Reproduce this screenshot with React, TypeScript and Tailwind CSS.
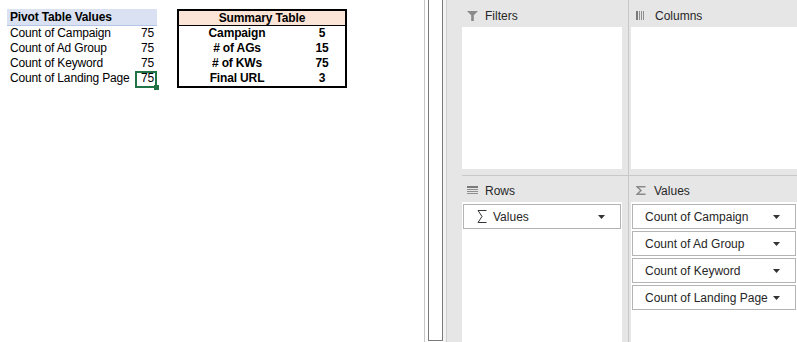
import type { ReactNode } from 'react';

const pivotRows = [
  { label: 'Count of Campaign', value: 75 },
  { label: 'Count of Ad Group', value: 75 },
  { label: 'Count of Keyword', value: 75 },
  { label: 'Count of Landing Page', value: 75, selected: true },
];

const summaryRows = [
  { label: 'Campaign', value: 5 },
  { label: '# of AGs', value: 15 },
  { label: '# of KWs', value: 75 },
  { label: 'Final URL', value: 3 },
];

const valueFields = ['Count of Campaign', 'Count of Ad Group', 'Count of Keyword', 'Count of Landing Page'];

function FunnelIcon() {
  return (
    <svg width="11" height="10" viewBox="0 0 11 10">
      <path d="M0 0H11L6.8 4.2V10H4.2V4.2Z" fill="#8a8a8a" />
    </svg>
  );
}

function ColumnsIcon() {
  return (
    <svg width="8" height="9" viewBox="0 0 8 9">
      <rect x="0" y="0" width="2" height="9" fill="#7a7a7a" />
      <rect x="3" y="0" width="1" height="9" fill="#8f8f8f" />
      <rect x="5" y="0" width="1" height="9" fill="#8f8f8f" />
      <rect x="7" y="0" width="1" height="9" fill="#8f8f8f" />
    </svg>
  );
}

function RowsIcon() {
  return (
    <svg width="11" height="9" viewBox="0 0 11 9">
      <rect x="0" y="0" width="11" height="2" fill="#7a7a7a" />
      <rect x="0" y="3" width="11" height="1" fill="#8f8f8f" />
      <rect x="0" y="5" width="11" height="1" fill="#8f8f8f" />
      <rect x="0" y="7" width="11" height="1" fill="#8f8f8f" />
    </svg>
  );
}

function SigmaIcon({ color, w, h, sw }: { color: string; w: number; h: number; sw: number }) {
  return (
    <svg width={w} height={h} viewBox={`0 0 ${w} ${h}`}>
      <path
        d={`M${w - 0.5} ${sw / 2}H1L${w / 2} ${h / 2}L1 ${h - sw / 2}H${w - 0.5}`}
        fill="none"
        stroke={color}
        strokeWidth={sw}
      />
    </svg>
  );
}

function Caret() {
  return (
    <svg width="7" height="4" viewBox="0 0 7 4">
      <path d="M0 0H7L3.5 4Z" fill="#333" />
    </svg>
  );
}

function AreaHeader({ icon, label, gap, className }: { icon: ReactNode; label: string; gap: string; className: string }) {
  return (
    <div className={`flex items-center pl-[5px] text-[12px] text-[#262626] ${gap} ${className}`}>
      {icon}
      <span>{label}</span>
    </div>
  );
}

function FieldItem({ children, pl }: { children: ReactNode; pl: string }) {
  return (
    <div className={`h-[25px] border border-[#b4b4b4] bg-white flex items-center justify-between pr-[15px] ${pl} text-[12px] text-[#262626]`}>
      {children}
      <Caret />
    </div>
  );
}

export default function App() {
  return (
    <div className="flex w-[797px] h-[342px] bg-white overflow-hidden font-['Liberation_Sans',Arial,sans-serif] text-[12px] text-black">
      {/* worksheet */}
      <div className="w-[424px] h-full flex items-start gap-[20px] pt-[9px] pl-[7px] tracking-[-0.15px]">
        <div className="w-[150px]">
          <div className="h-[17px] bg-[#d9e1f2] border-b border-[#b4c6e7] flex items-center pl-[3px] font-bold">
            Pivot Table Values
          </div>
          {pivotRows.map((r) => (
            <div key={r.label} className="h-[15px] flex items-center">
              <div className="flex-1 pl-[3px] leading-[15px]">{r.label}</div>
              <div className="w-[22px] h-full relative text-right pr-[3px] leading-[15px]">
                {r.value}
                {r.selected && (
                  <>
                    <div className="absolute left-0 top-0 w-[22px] h-[17px] border-2 border-[#217346]" />
                    <div className="absolute right-[-2px] bottom-[-4px] w-[5px] h-[5px] bg-[#217346]" />
                  </>
                )}
              </div>
            </div>
          ))}
        </div>

        <div className="w-[170px] border-2 border-black font-bold">
          <div className="h-[15px] bg-[#fce4d6] border-b border-black flex items-center justify-center">
            Summary Table
          </div>
          {summaryRows.map((r) => (
            <div key={r.label} className="h-[15px] flex items-center leading-[15px]">
              <div className="w-[116px] text-center">{r.label}</div>
              <div className="flex-1 text-center pl-[4px]">{r.value}</div>
            </div>
          ))}
        </div>
      </div>

      {/* split bar */}
      <div className="w-px bg-[#c6c6c6]" />
      <div className="w-[3px]" />
      <div className="w-[15px] h-[341px] border border-t-0 border-[#7a7a7a] bg-white" />
      <div className="w-[3px] bg-[#f3f3f3]" />
      <div className="w-px bg-[#d0d0d0]" />

      {/* pivot field areas */}
      <div className="flex-1 bg-[#e6e6e6] pl-[15px] flex flex-col">
        <div className="h-[175px] flex">
          <div className="w-[160px] flex flex-col">
            <AreaHeader icon={<FunnelIcon />} label="Filters" gap="gap-[7px]" className="h-[27px] pt-[4px]" />
            <div className="h-[142px] bg-white" />
          </div>
          <div className="w-[6px]" />
          <div className="w-px bg-[#c8c8c8]" />
          <div className="w-[2px]" />
          <div className="flex-1 flex flex-col">
            <AreaHeader icon={<ColumnsIcon />} label="Columns" gap="gap-[11px]" className="h-[27px] pt-[4px]" />
            <div className="h-[142px] bg-white" />
          </div>
        </div>

        <div className="h-px bg-[#c8c8c8]" />

        <div className="flex-1 flex">
          <div className="w-[160px] flex flex-col">
            <AreaHeader icon={<RowsIcon />} label="Rows" gap="gap-[7px]" className="h-[26px] pt-[3px]" />
            <div className="flex-1 bg-white pt-[2px] px-[1px]">
              <FieldItem pl="pl-[13px]">
                <div className="flex items-center gap-[6px]">
                  <SigmaIcon color="#333" w={10} h={13} sw={1} />
                  <span>Values</span>
                </div>
              </FieldItem>
            </div>
          </div>
          <div className="w-[6px]" />
          <div className="w-px bg-[#c8c8c8]" />
          <div className="w-[2px]" />
          <div className="flex-1 flex flex-col">
            <AreaHeader
              icon={<SigmaIcon color="#8a8a8a" w={10} h={9} sw={1.5} />}
              label="Values"
              gap="gap-[8px]"
              className="h-[26px] pt-[3px]"
            />
            <div className="flex-1 bg-white pt-[2px] px-[1px] flex flex-col gap-[2px]">
              {valueFields.map((f) => (
                <FieldItem key={f} pl="pl-[12px]">
                  <span>{f}</span>
                </FieldItem>
              ))}
            </div>
          </div>
        </div>
      </div>
    </div>
  );
}
